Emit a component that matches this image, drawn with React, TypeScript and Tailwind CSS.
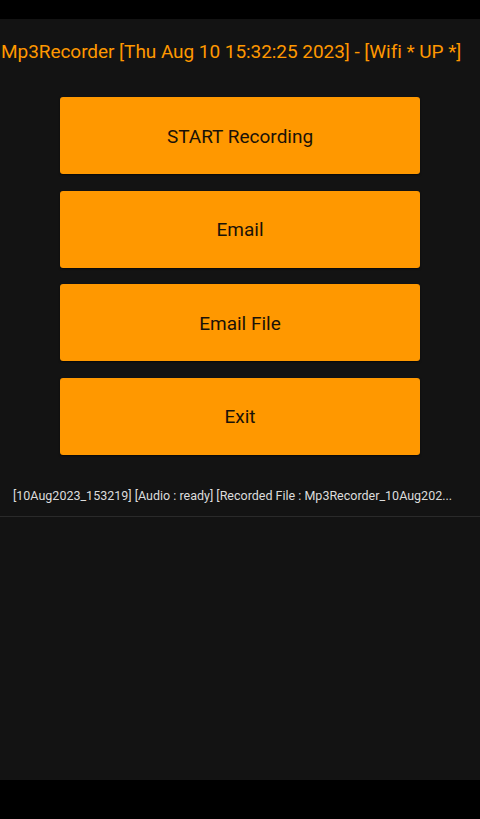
const buttons = ["START Recording", "Email", "Email File", "Exit"];

export default function App() {
  return (
    <div className="w-[480px] h-[819px] bg-black flex flex-col" style={{ fontFamily: "Roboto, 'Noto Sans', sans-serif" }}>
      <div className="h-[19px] bg-black" />
      <div className="flex-1 bg-[#131313] flex flex-col">
        <div className="h-[62px] flex items-center pl-px pt-[4px]">
          <span className="text-[19px] text-[#ff9800] whitespace-nowrap tracking-[-0.05px]">
            Mp3Recorder [Thu Aug 10 15:32:25 2023] - [Wifi * UP *]
          </span>
        </div>
        <div className="flex flex-col items-center gap-[16.5px] mt-4">
          {buttons.map((b) => (
            <div
              key={b}
              className="w-[360px] h-[77px] bg-[#ff9800] rounded-[3px] shadow-[0_1px_2px_rgba(0,0,0,0.6)] flex items-center justify-center pt-[3px] text-[19px] text-[#1a1208]"
            >
              {b}
            </div>
          ))}
        </div>
        <div className="mt-[30px] pl-[13px] pr-4 h-[23px] flex items-center">
          <span className="text-[12.5px] text-[#dcdcdc] whitespace-nowrap">
            [10Aug2023_153219] [Audio : ready] [Recorded File : Mp3Recorder_10Aug202...
          </span>
        </div>
        <div className="mt-[8px] h-px bg-[#2a2a2a]" />
      </div>
      <div className="h-[39px] bg-black" />
    </div>
  );
}
